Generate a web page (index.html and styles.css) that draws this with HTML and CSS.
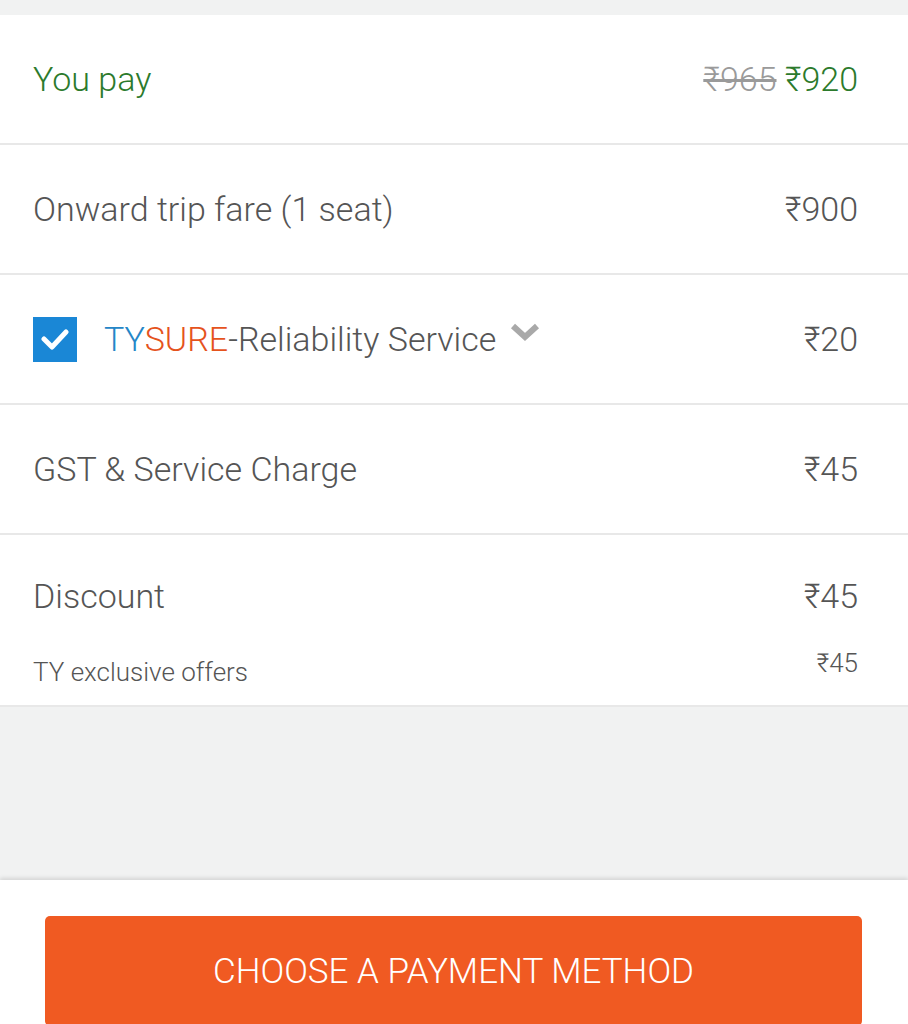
FILE: index.html
```html
<!DOCTYPE html>
<html lang="en">
<head>
    <meta charset="UTF-8">
    <meta name="viewport" content="width=device-width, initial-scale=1">
    <title>Fare Summary</title>
    <link rel="stylesheet" href="styles.css">
</head>
<body>
    <div class="page">
        <div class="fare">
            <div class="row pay">
                <span>You pay</span>
                <span><s class="old">₹965</s> ₹920</span>
            </div>
            <div class="row">
                <span>Onward trip fare (1 seat)</span>
                <span>₹900</span>
            </div>
            <div class="row">
                <span class="sure">
                    <span class="check">
                        <svg width="28" height="24" viewBox="0 0 28 24"><path d="M3 12 L11 20 L25 5" fill="none" stroke="#fff" stroke-width="5" stroke-linecap="round" stroke-linejoin="round"/></svg>
                    </span>
                    <span><span class="ty">TY</span><span class="su">SURE</span>-Reliability Service</span>
                    <svg class="chev" width="30" height="20" viewBox="0 0 30 20"><path d="M3 4 L15 15 L27 4" fill="none" stroke="#a9a9a9" stroke-width="6" stroke-linejoin="miter"/></svg>
                </span>
                <span>₹20</span>
            </div>
            <div class="row">
                <span>GST &amp; Service Charge</span>
                <span>₹45</span>
            </div>
            <div class="row discount">
                <div class="line">
                    <span>Discount</span>
                    <span>₹45</span>
                </div>
                <div class="line small">
                    <span>TY exclusive offers</span>
                    <span class="up">₹45</span>
                </div>
            </div>
        </div>
        <div class="spacer"></div>
        <div class="footer">
            <button class="cta">CHOOSE A PAYMENT METHOD</button>
        </div>
    </div>
</body>
</html>
```

FILE: styles.css
```css
* {
    box-sizing: border-box;
    margin: 0;
    padding: 0;
}

body {
    background: #f1f2f2;
    font-family: Roboto, "Liberation Sans", sans-serif;
    font-weight: 300;
    color: #555;
}

.page {
    height: 1024px;
    display: flex;
    flex-direction: column;
    padding-top: 15px;
    overflow: hidden;
}

.fare {
    background: #fff;
}

.row {
    height: 130px;
    padding: 0 50px 0 33px;
    display: flex;
    align-items: center;
    justify-content: space-between;
    font-size: 34px;
    border-bottom: 2px solid #e8e8e8;
}

.pay {
    color: #2c7a2c;
}

.old {
    color: #9a9a9a;
}

.sure {
    display: flex;
    align-items: center;
}

.check {
    width: 44px;
    height: 45px;
    background: #1a87d6;
    display: flex;
    align-items: center;
    justify-content: center;
    margin-right: 27px;
}

.ty {
    color: #2486c7;
}

.su {
    color: #e5531d;
}

.chev {
    margin-left: 14px;
    margin-top: -14px;
}

.discount {
    height: 172px;
    flex-direction: column;
    align-items: stretch;
    justify-content: flex-start;
    padding-top: 41px;
}

.line {
    display: flex;
    justify-content: space-between;
}

.small {
    font-size: 26px;
    margin-top: 41px;
}

.small .up {
    margin-top: -9px;
}

.spacer {
    flex: 1;
}

.footer {
    background: #fff;
    height: 144px;
    padding: 36px 46px 0 45px;
    box-shadow: 0 -2px 4px rgba(0, 0, 0, 0.12);
}

.cta {
    width: 100%;
    height: 110px;
    background: #f05a22;
    color: #fff;
    border: none;
    border-radius: 5px;
    font-family: Roboto, "Liberation Sans", sans-serif;
    font-weight: 300;
    font-size: 35px;
}
```
